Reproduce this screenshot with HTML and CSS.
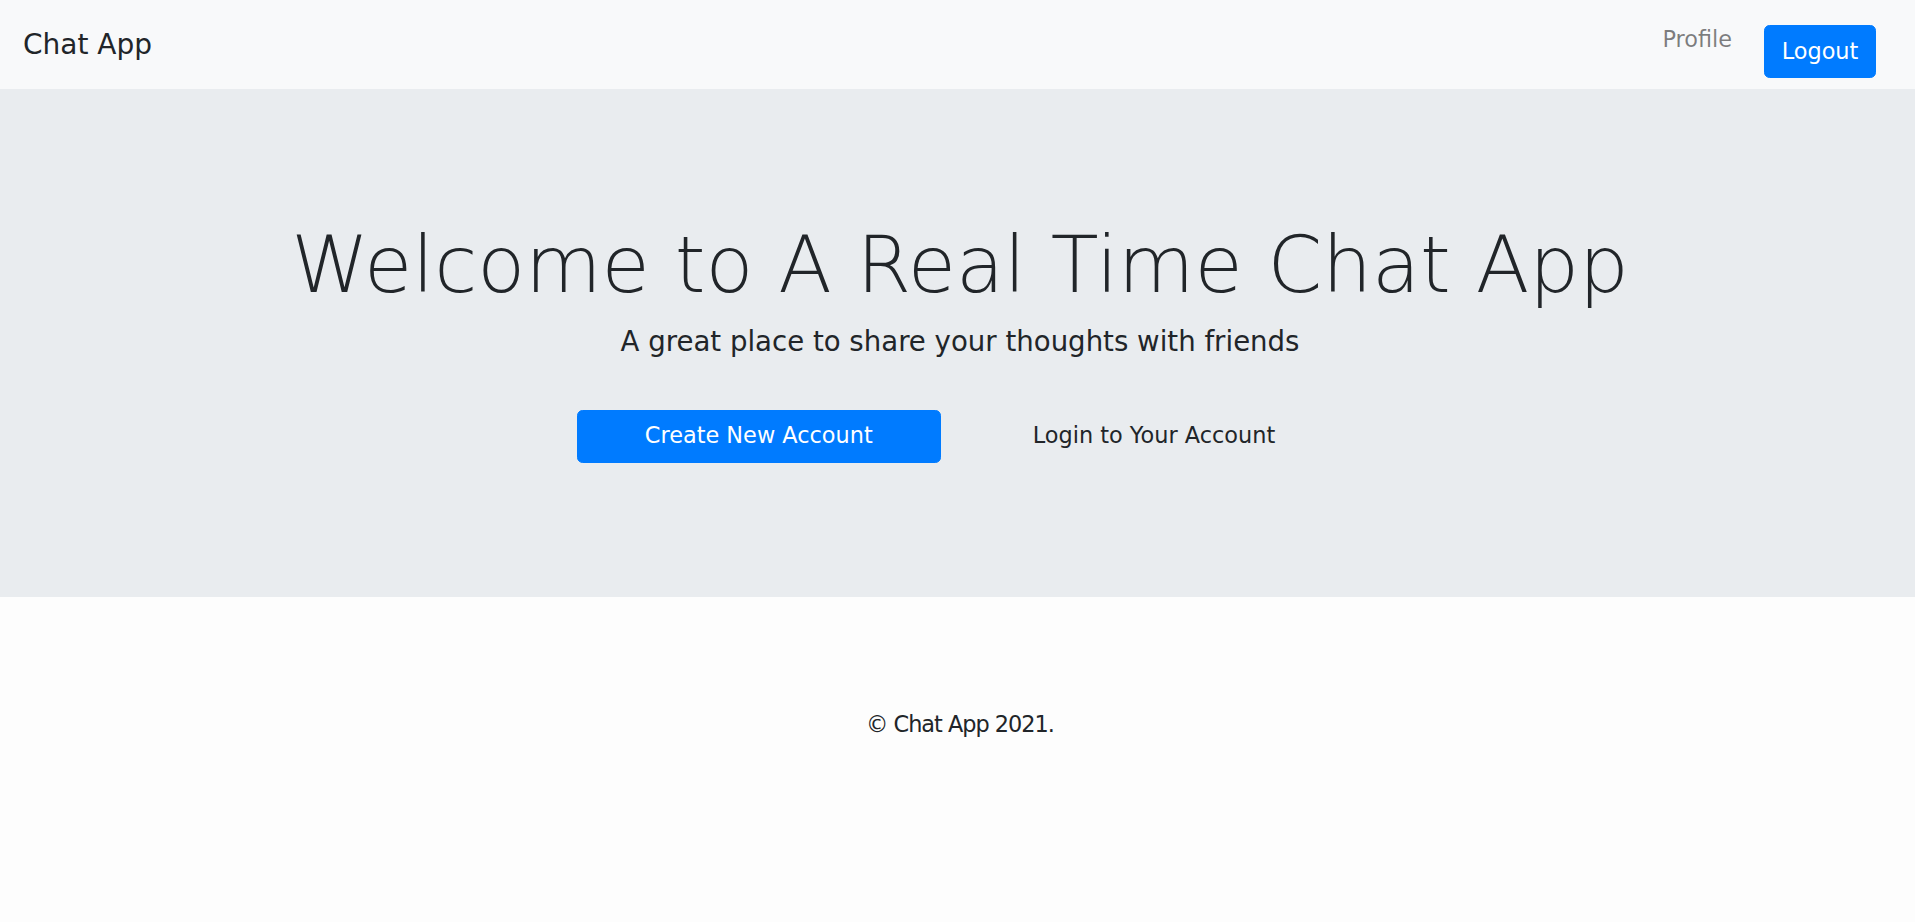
FILE: index.html
```html
<!DOCTYPE html>
<html lang="en">
<head>
<meta charset="utf-8">
<title>Chat App</title>
<link rel="stylesheet" href="styles.css">
</head>
<body>
  <nav class="navbar">
    <a class="brand" href="#">Chat App</a>
    <div class="nav-right">
      <a class="nav-link" href="#">Profile</a>
      <button class="btn btn-primary btn-logout">Logout</button>
    </div>
  </nav>
  <section class="hero">
    <h1 class="hero-title">Welcome to A Real Time Chat App</h1>
    <p class="hero-lead">A great place to share your thoughts with friends</p>
    <div class="hero-actions">
      <a class="btn btn-primary btn-wide" href="#">Create New Account</a>
      <a class="btn btn-plain btn-wide" href="#">Login to Your Account</a>
    </div>
  </section>
  <footer class="footer">
    <p class="footer-text">© Chat App 2021.</p>
  </footer>
</body>
</html>
```
FILE: styles.css
```css
* { box-sizing: border-box; }
html, body { margin: 0; padding: 0; }
body {
  background: #fdfdfd;
  color: #212529;
  font-family: "DejaVu Sans", "Liberation Sans", sans-serif;
  font-size: 22.4px;
  line-height: 1.5;
}
a { text-decoration: none; }

.navbar {
  height: 89px;
  background: #f8f9fa;
  display: flex;
  justify-content: space-between;
  align-items: flex-start;
  padding: 0 39px 0 23px;
}
.brand {
  margin-top: 23.5px;
  font-size: 28px;
  line-height: 42px;
  color: #212529;
}
.nav-right {
  display: flex;
  align-items: flex-start;
  gap: 32px;
}
.nav-link {
  margin-top: 22.5px;
  font-size: 22.4px;
  line-height: 33.6px;
  color: rgba(0, 0, 0, 0.5);
}
.btn {
  display: inline-flex;
  align-items: center;
  justify-content: center;
  height: 53px;
  font-family: inherit;
  font-size: 22.4px;
  line-height: 33.6px;
  border: 1.4px solid transparent;
  border-radius: 5.6px;
  white-space: nowrap;
}
.btn-primary {
  background: #007bff;
  border-color: #007bff;
  color: #fff;
}
.btn-plain {
  background: transparent;
  color: #212529;
}
.btn-logout {
  margin-top: 25px;
  width: 112px;
  padding: 0;
}
.btn-wide { padding: 0 67px; }

.hero {
  background: #e9ecef;
  padding: 129px 0 134px 5px;
  text-align: center;
}
.hero-title {
  margin: 0;
  font-size: 78.4px;
  font-weight: 300;
  line-height: 93.6px;
  color: #212529;
}
.hero-lead {
  margin: 9.5px 0 0;
  font-size: 27.6px;
  line-height: 42px;
}
.hero-actions {
  margin-top: 46.7px;
  display: flex;
  justify-content: center;
  gap: 24px;
}

.footer {
  padding: 111.7px 0 0 5px;
  text-align: center;
}
.footer-text {
  margin: 0;
  font-size: 22.4px;
  line-height: 33.6px;
  letter-spacing: -1px;
}
```
